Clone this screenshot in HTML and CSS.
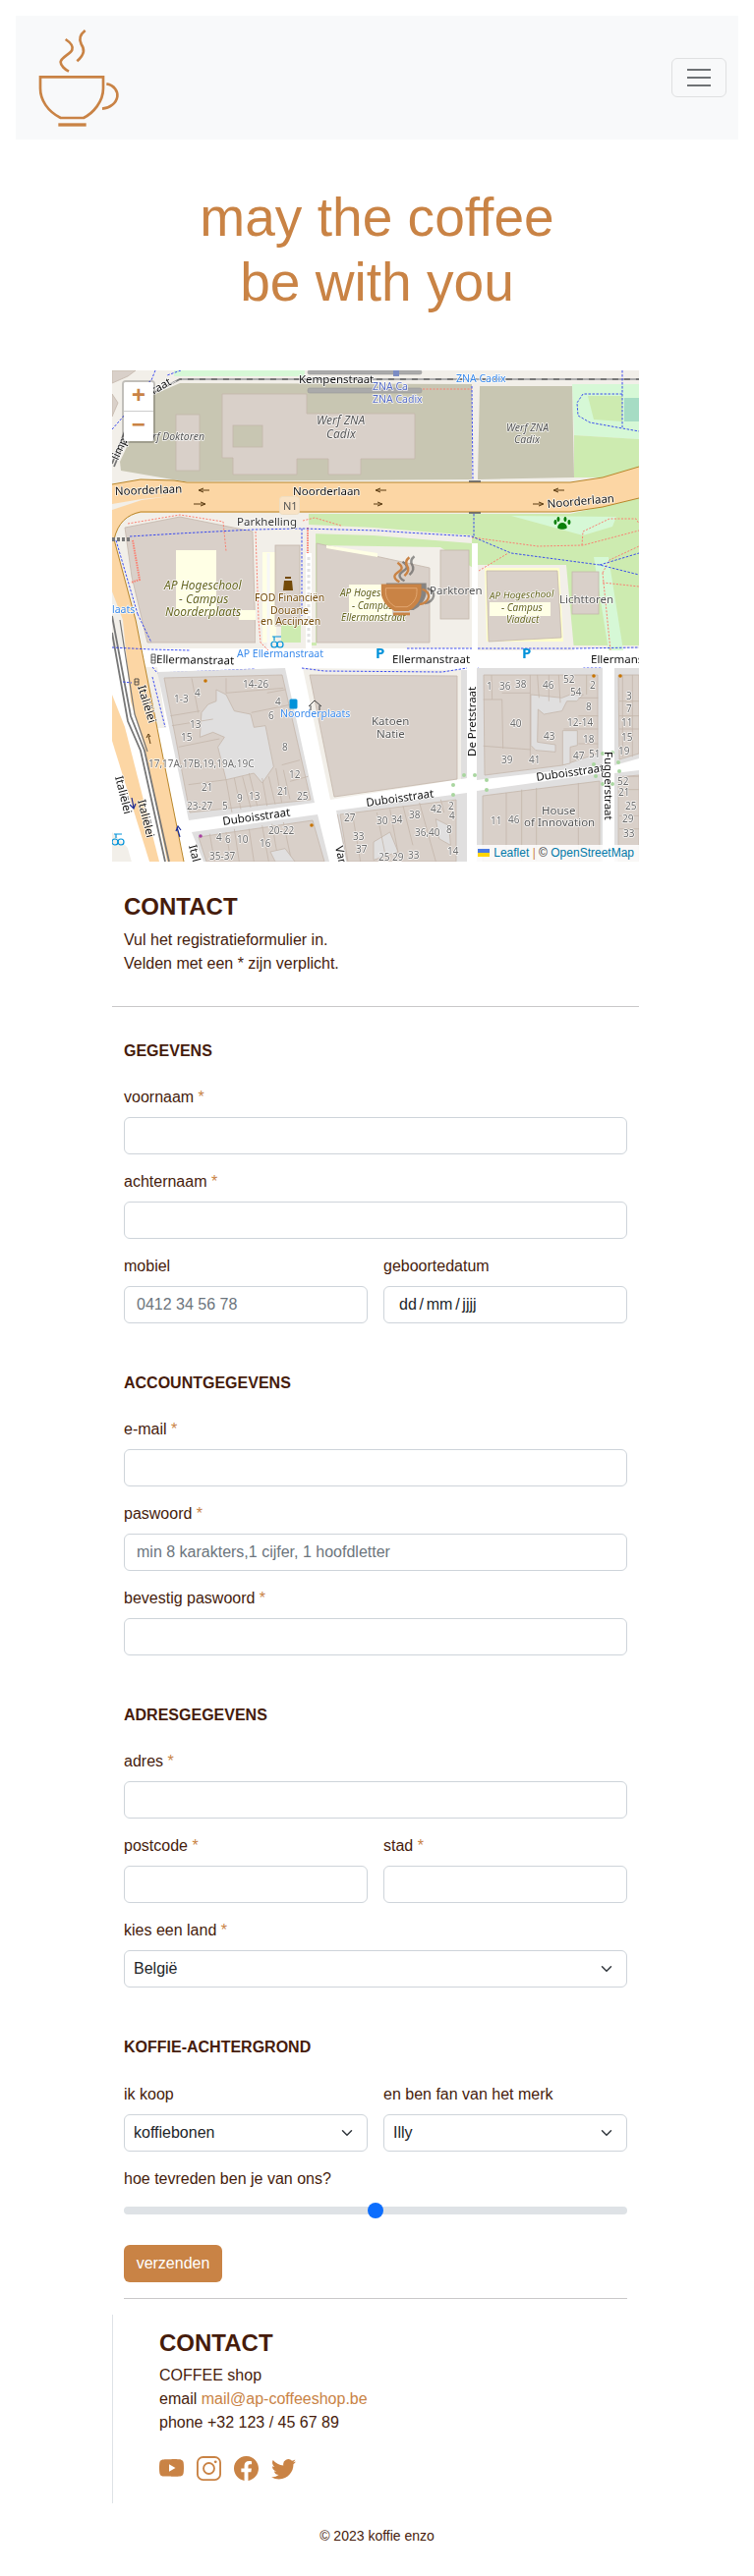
FILE: index.html
```html
<!DOCTYPE html>
<html lang="nl">
<head>
<meta charset="utf-8">
<title>koffie enzo</title>
<link rel="stylesheet" href="styles.css">
</head>
<body>
<nav class="navbar">
  <svg class="logo" viewBox="0 0 330 345">
    <path d="M110 60C125 70 135 80 130 92C125 105 95 115 95 130C95 140 108 152 120 158"/>
    <path d="M170 33C155 45 150 60 158 75C168 90 170 105 145 127"/>
    <path d="M235 196C260 200 270 220 268 235C265 255 245 270 222 272"/>
    <path d="M33 175H225V210C225 250 195 285 165 300H95C55 280 33 245 33 210Z"/>
    <path class="logo-saucer" d="M88 321H173"/>
  </svg>
  <button class="toggler" type="button" aria-label="menu"><span></span><span></span><span></span></button>
</nav>

<h1 class="title">may the coffee<br>be with you</h1>

<main class="container">
  <div class="map">
    <svg class="map-svg" viewBox="0 0 536 500">
      <defs><filter id="soft"><feGaussianBlur stdDeviation="1.4"/></filter></defs>
      <rect class="land" width="536" height="285"/>
      <rect class="street" y="283" width="536" height="217"/>

      <!-- top greens -->
      <polygon class="pale" points="63,0 196,0 196,6 63,6"/>
      <polygon class="pale" points="468,14 536,14 536,70 470,66"/>
      <polygon class="grass" points="470,66 536,70 536,99 499,109 470,109"/>
      <polygon class="grass" points="484,26 519,26 519,52 490,50"/>
      <rect class="pond" x="521" y="28" width="15" height="24"/>

      <!-- top left corner -->
      <polygon class="house" points="0,0 24,0 16,6 0,13"/>
      <polygon class="house" points="0,24 6,33 0,47"/>

      <!-- shipyards -->
      <polygon class="yard" points="8,93 39,26 69,13 366,14 366,111 73,113 9,102"/>
      <polygon class="yard" points="374,16 468,16 470,109 372,111"/>
      <polygon class="house" points="112,24 198,24 198,44 308,44 308,90 253,90 253,106 220,106 220,90 188,90 188,106 123,106 123,89 112,89"/>
      <rect class="yard-in" x="123" y="56" width="30" height="22"/>
      <rect class="house" x="65" y="45" width="24" height="57"/>

      <!-- green south of Noorderlaan -->
      <polygon class="grass" points="200,146 466,146 536,130 536,280 200,280"/>
      <polygon class="pale" points="406,148 513,149 509,159 479,168"/>
      <polygon class="land" points="200,157 266,160 366,168 366,176 266,168 200,166"/>
      <polygon class="land" points="208,178 334,180 372,204 372,280 208,280"/>
      <polygon class="land" points="372,198 462,198 470,285 372,285"/>
      <polygon class="pale" points="490,190 505,190 520,285 505,285"/>

      <!-- left land / campus -->
      <polygon class="house" points="13,160 69,149 143,164 146,277 36,277 20,210"/>
      <rect class="school" x="65" y="183" width="41" height="66"/>
      <rect class="school" x="129" y="244" width="17" height="10"/>
      <polygon class="land" points="146,166 207,166 207,277 146,277"/>
      <rect class="school" x="153" y="185" width="14" height="92"/>
      <rect class="house" x="166" y="178" width="25" height="82"/>
      <rect class="grass" x="172" y="259" width="20" height="18"/>
      <polygon class="house" points="208,176 323,201 323,277 208,277"/>
      <polygon class="school" points="218,178 270,186 270,190 218,181"/>
      <rect class="school" x="241" y="218" width="44" height="37"/>
      <rect class="house" x="334" y="183" width="29" height="70"/>
      <polygon class="school-line" points="379,201 455,201 459,276 381,276"/>
      <polygon class="house" points="381,204 453,204 457,272 383,276"/>
      <rect class="school" x="384" y="236" width="62" height="14"/>
      <rect class="house" x="468" y="205" width="27" height="43"/>
      <path class="white-path" d="M369 176V283"/>
      <path class="white-path thin" d="M159 186V283"/>
      <path class="white-path" d="M200 186V283"/>
      <path class="dots" d="M200 190V280"/>

      <!-- land strips in lower half -->
      <polygon class="land" points="30,302 46,302 55,364 44,364"/>
      <polygon class="land" points="194,303 361,305 361,415 222,437"/>
      <polygon class="block" points="355,305 361,305 361,415 355,416"/>
      <polygon class="house" points="201,310 351,311 351,416 226,434"/>
      <polygon class="land" points="0,470 30,500 0,500"/>

      <!-- Noorderlaan + left motorway -->
      <path class="road" d="M0 116L29 111L63 112L76 114H466L499 109L536 98V130L499 139L466 144L29 145C15 147 6 155 2 172L21 243L24 254L73 500H56L33 383L19 337L11 254L0 225Z"/>
      <path class="road-hole" d="M0 142L30 132L60 128L30 131L0 136Z"/>
      <polygon class="road" points="0,330 13,363 48,500 38,500 0,377"/>
      <path class="road-edge" d="M0 116L29 111L63 112L76 114H466L499 109L536 98M536 130L499 139L466 144H29C15 147 6 155 2 172L21 243L24 254L73 500"/>
      <path class="bridge" d="M363 113H375M363 145H375"/>

      <!-- rails -->
      <path class="rail" d="M0 267L16 357L29 387L54 500"/>
      <path class="rail" d="M0 250L19 352L33 387L58 500"/>
      <path class="rail thin-rail" d="M8 254L23 350L36 388"/>
      <path class="rail" d="M0 95L13 62M2 98L16 64"/>
      <path class="rail" d="M28 30L42 23L69 9H536"/>
      <path class="rail-white" d="M28 30L42 23L69 9H536"/>
      <path class="tram" d="M0 172H18"/>
      <path class="white-lane" d="M-3 395L30 510"/>

      <!-- grey bars -->
      <rect class="bar" x="199" y="0" width="116" height="4" rx="2"/>
      <rect class="bar" x="199" y="18" width="116" height="5" rx="2"/>
      <rect class="bar-blue" x="286" y="0" width="6" height="6"/>

      <!-- paths -->
      <path class="foot" d="M16 156L69 147L113 154L116 184"/>
      <path class="foot thick" d="M21 173L28 213L19 216"/>
      <path class="foot" d="M146 164L149 254L151 277L159 285"/>
      <path class="foot" d="M194 153L206 150L233 158"/>
      <path class="foot thick" d="M199 160V186"/>
      <path class="foot" d="M316 19H366"/>
      <path class="foot" d="M373 204L403 186"/>
      <path class="foot" d="M366 170L433 179L479 178L536 163"/>
      <path class="foot" d="M478 178L479 164L506 151L533 151L536 156"/>
      <path class="foot" d="M499 206L506 193L536 179"/>
      <path class="foot" d="M499 216L536 220"/>
      <path class="foot" d="M499 206L507 285"/>
      <path class="bike" d="M18 169L68 166L144 162L193 161L270 163L299 165L366 169L406 186L496 198L536 208"/>
      <path class="bike" d="M4 173L26 248"/>
      <path class="bike" d="M366 16L367 111M368 146V169M519 0V58M193 161V250"/>
      <path class="bike" d="M519 24H479L473 33L474 46L486 53L536 62"/>
      <path class="bike" d="M496 198L536 186"/>
      <path class="bike" d="M0 60L14 44V24M44 0L40 10L34 15M70 0L56 5"/>
      <path class="bike" d="M0 282L40 284L80 285M300 283H366M372 283L473 283L536 282"/>
      <path class="bike" d="M41 302L46 308L146 304M193 303L216 306L336 307L361 303M372 303L380 306L473 306L480 303L499 303"/>
      <path class="bike" d="M41 312L54 363M11 317L20 318"/>
      <path class="bike" d="M26 248L40 277"/>

      <!-- residential blocks -->
      <polygon class="block" points="46,307 176,303 206,440 78,458"/>
      <polygon class="house" points="53,313 173,310 202,437 79,450"/>
      <polygon class="block" points="81,470 209,452 221,500 93,500"/>
      <polygon class="house" points="88,475 204,458 216,500 96,500"/>
      <polygon class="block" points="228,448 361,430 361,500 238,500"/>
      <polygon class="house" points="232,452 350,437 350,500 240,500"/>
      <polygon class="block" points="371,303 499,303 499,402 371,417"/>
      <polygon class="house" points="378,310 494,310 494,390 458,402 379,412"/>
      <polygon class="block" points="511,303 536,303 536,395 511,402"/>
      <polygon class="house" points="515,310 536,310 536,390 516,396"/>
      <polygon class="block" points="371,428 499,410 499,500 371,500"/>
      <polygon class="house" points="377,433 496,418 496,500 377,500"/>
      <polygon class="block" points="511,410 536,407 536,500 511,500"/>
      <polygon class="house" points="515,414 536,412 536,500 515,500"/>

      <g transform="translate(-4 250) scale(.33333)">
        <polygon class="court" points="330,225 360,240 385,290 435,300 445,340 480,335 505,460 470,510 445,480 360,500 335,400 355,370 320,355 280,370 285,295 305,270 330,260"/>
        <path class="sub" d="M255 190L275 295M190 305L280 290M195 335L320 315M215 400L340 375M245 515L360 500M360 500L378 600M385 495L405 590M410 490L435 585M430 480L455 580M470 495L485 580M490 490L510 575M512 465L530 570M535 470L555 560M555 505L610 490M530 455L585 440M437 295L560 270M485 235L540 225M360 190V235L535 220M310 665L325 750M360 660L375 750M385 650L400 750M430 650L445 750M470 640L490 750M500 635L520 750M535 630L560 750M700 605L730 750M745 600L770 750"/>
        <polygon class="court" points="495,720 540,710 570,750 510,750"/>
      </g>
      <g transform="translate(266 250) scale(.33333)">
        <polygon class="court" points="480,240 575,250 600,240 640,240 620,260 590,260 575,290 520,300 502,285 500,385 555,393 555,415 495,410 480,395"/>
        <polygon class="court" points="577,350 622,350 622,395 600,400 600,450 577,455"/>
        <polygon class="court" points="0,690 50,660 75,720 0,745"/>
        <polygon class="court" points="190,620 230,640 235,700 200,680"/>
        <path class="sub" d="M335 255H392M392 255L395 405M335 397L480 408M360 180L362 255M392 235H478M478 180V440M500 180L505 250M535 180V260M565 180L570 265M625 250H685M625 305H685M580 345H685M625 390H685M650 180V240M50 590L80 750M90 580L120 700M140 570L190 750M205 560L215 600M10 600L40 750M405 540V750M452 530V750M497 525V750M625 510V750M760 180V430M790 180V430M750 260H810M750 305H810M750 345H810M750 490H810M750 530H810M750 610H810M750 650H810"/>
      </g>

      <!-- trees -->
      <g class="trees">
        <circle cx="358" cy="412" r="2"/><circle cx="369" cy="412" r="2"/><circle cx="381" cy="417" r="2"/><circle cx="381" cy="427" r="2"/><circle cx="347" cy="422" r="2"/><circle cx="347" cy="432" r="2"/>
        <circle cx="499" cy="390" r="2"/><circle cx="509" cy="389" r="2"/><circle cx="490" cy="401" r="2"/><circle cx="515" cy="399" r="2"/><circle cx="516" cy="408" r="2"/><circle cx="492" cy="413" r="2"/><circle cx="499" cy="421" r="2"/><circle cx="509" cy="421" r="2"/>
      </g>
      <circle class="dot-o" cx="95" cy="316" r="1.8"/><circle class="dot-o" cx="203" cy="463" r="1.8"/><circle class="dot-o" cx="490" cy="311" r="1.8"/><circle class="dot-o" cx="517" cy="311" r="1.8"/>
      <circle class="dot-p" cx="90" cy="474" r="1.8"/>

      <!-- road text -->
      <g class="t-road">
        <text x="190" y="13">Kempenstraat</text>
        <text x="61" y="14" text-anchor="end" transform="rotate(-30 61 14)">raat</text>
        <text x="6" y="92" transform="rotate(-65 6 92)">limp</text>
        <text x="3" y="127" transform="rotate(-2 3 127)">Noorderlaan</text>
        <text x="184" y="127">Noorderlaan</text>
        <text x="443" y="140" transform="rotate(-5 443 140)">Noorderlaan</text>
        <text x="127" y="158" class="grey">Parkhelling</text>
        <text x="45" y="298" transform="rotate(1 45 298)">Ellermanstraat</text>
        <text x="285" y="298">Ellermanstraat</text>
        <text x="487" y="298">Ellermans</text>
        <text x="113" y="463" transform="rotate(-8 113 463)">Duboisstraat</text>
        <text x="259" y="444" transform="rotate(-8 259 444)">Duboisstraat</text>
        <text x="432" y="418" transform="rotate(-8 432 418)">Duboisstraat</text>
        <text x="370" y="393" transform="rotate(-90 370 393)">De Pretstraat</text>
        <text x="501" y="388" transform="rotate(90 501 388)">Fuggerstraat</text>
        <text x="26" y="322" transform="rotate(73 26 322)">Italiëlei</text>
        <text x="26" y="438" transform="rotate(76 26 438)">Italiëlei</text>
        <text x="3" y="414" transform="rotate(76 3 414)">Italiëlei</text>
        <text x="78" y="484" transform="rotate(76 78 484)">Ital</text>
        <text x="227" y="485" transform="rotate(78 227 485)">Van</text>
      </g>
      <rect class="shield" x="170.500" y="128.500" width="20" height="18" rx="3"/>
      <text class="t-shield" x="174" y="142">N1</text>

      <!-- arrows -->
      <g class="arrow">
        <path d="M99 122H89M93 120L88 122L93 124"/><path d="M83 136H94M90 134L95 136L90 138"/>
        <path d="M279 122H269M273 120L268 122L273 124"/><path d="M266 136H274M270 134L275 136L270 138"/>
        <path d="M460 122H450M454 120L449 122L454 124"/><path d="M428 136H438M434 134L439 136L434 138"/>
        <path d="M37 372L39 380M35 374L37 370L39 373"/>
      </g>

      <!-- place labels -->
      <g class="t-yard">
        <text x="208" y="55" class="big">Werf ZNA</text><text x="218" y="69" class="big">Cadix</text>
        <text x="401" y="62">Werf ZNA</text><text x="409" y="74">Cadix</text>
        <text x="94" y="71" text-anchor="end">rf Doktoren</text>
      </g>
      <g class="t-school">
        <text x="53" y="223" class="big">AP Hogeschool</text><text x="68" y="237" class="big">- Campus</text><text x="54" y="250" class="big">Noorderplaats</text>
        <text x="232" y="230">AP Hogeschool</text><text x="244" y="243">- Campus</text><text x="233" y="255">Ellermanstraat</text>
        <text x="384" y="233" transform="rotate(-2 384 233)">AP Hogeschool</text><text x="396" y="245">- Campus</text><text x="401" y="257">Viaduct</text>
      </g>
      <g class="t-brown"><text x="145" y="235">FOD Financiën</text><text x="161" y="248">Douane</text><text x="151" y="259">en Accijnzen</text></g>
      <g class="t-transit">
        <text x="350" y="12">ZNA Cadix</text>
        <text x="127" y="292">AP Ellermanstraat</text>
        <text x="171" y="353">Noorderplaats</text>
        <text x="0" y="247">laats</text>
      </g>
      <g class="t-stop"><text x="265" y="20">ZNA Ca</text><text x="265" y="33">ZNA Cadix</text></g>
      <g class="t-build">
        <text x="323" y="228">Parktoren</text><text x="455" y="237">Lichttoren</text>
        <text x="264" y="361">Katoen</text><text x="269" y="374">Natie</text>
        <text x="437" y="452">House</text><text x="419" y="464">of Innovation</text>
      </g>
      <g class="t-num">
        <text x="133" y="323">14-26</text><text x="63" y="338">1-3</text><text x="84" y="332">4</text><text x="166" y="341">4</text><text x="159" y="355">6</text><text x="79" y="364">13</text><text x="70" y="377">15</text><text x="173" y="387">8</text><text x="37" y="404">17,17A,17B,19,19A,19C</text><text x="180" y="415">12</text><text x="91" y="428">21</text><text x="168" y="432">21</text><text x="188" y="437">25</text><text x="127" y="439">9</text><text x="139" y="437">13</text><text x="76" y="447">23-27</text><text x="112" y="447">5</text>
        <text x="159" y="472">20-22</text><text x="106" y="479">4</text><text x="115" y="481">6</text><text x="127" y="481">10</text><text x="150" y="485">16</text><text x="99" y="498">35-37</text><text x="236" y="459">27</text><text x="245" y="478">33</text><text x="248" y="491">37</text>
        <text x="381" y="325">1</text><text x="394" y="325">36</text><text x="410" y="323">38</text><text x="438" y="324">46</text><text x="459" y="318">52</text><text x="486" y="324">2</text><text x="466" y="331">54</text><text x="482" y="346">8</text><text x="405" y="363">40</text><text x="463" y="362">12-14</text><text x="439" y="376">43</text><text x="479" y="379">18</text><text x="469" y="396">47</text><text x="485" y="394">51</text><text x="396" y="400">39</text><text x="424" y="400">41</text>
        <text x="515" y="391">19</text><text x="523" y="335">3</text><text x="523" y="348">7</text><text x="518" y="362">11</text><text x="518" y="377">15</text><text x="514" y="422">52</text><text x="515" y="433">21</text><text x="522" y="447">25</text><text x="519" y="460">29</text><text x="520" y="475">33</text>
        <text x="385" y="462">11</text><text x="403" y="461">46</text><text x="269" y="462">30</text><text x="284" y="461">34</text><text x="302" y="456">38</text><text x="324" y="450">42</text><text x="342" y="447">2</text><text x="343" y="457">4</text><text x="308" y="474">36,40</text><text x="340" y="471">8</text><text x="341" y="493">14</text><text x="301" y="497">33</text><text x="271" y="499">25 29</text>
      </g>
      <text class="t-p" x="268" y="293">P</text>
      <text class="t-p" x="417" y="293">P</text>

      <!-- POI icons -->
      <g class="poi-blue">
        <rect x="180.500" y="334.500" width="8" height="10" rx="1.500"/>
        <path class="poi-line" d="M163 271H172M165 271V275"/><circle class="poi-line" cx="165" cy="279" r="3"/><circle class="poi-line" cx="171" cy="279" r="3"/>
        <path class="poi-line" d="M2 472H10M4 472V476"/><circle class="poi-line" cx="3" cy="480" r="3"/><circle class="poi-line" cx="9" cy="480" r="3"/>
      </g>
      <path class="poi-shelter" d="M200 342L206 336L213 342M202 341V346M211 341V346"/>
      <path class="poi-customs" d="M176 210H182V212H176ZM175 214H183L184 224H174Z"/>
      <path class="poi-paw" d="M458 155C454 155 452 160 454 161C456 162 460 162 462 161C464 160 462 155 458 155ZM454 149A1.500 2.500 0 1 1 453.900 149ZM461 149A1.500 2.500 0 1 1 460.900 149ZM451 152A1.500 2.500 0 1 1 450.900 152ZM465 152A1.500 2.500 0 1 1 464.900 152Z"/>
      <path class="poi-signal" d="M40 289H44V298H40Z M40 292H44M40 295H44"/>
      <path class="poi-signal" d="M23 314H27V320H23Z M23 317H27"/>
      <path class="poi-dark-blue" d="M20 435L22 445M18 442L22 446L24 441M66 465L69 475M65 469L67 464L70 468"/>

      <!-- marker -->
      <g transform="translate(273.500 182.700) scale(.2)" class="marker-shadow" filter="url(#soft)">
        <path d="M110 60C125 70 135 80 130 92C125 105 95 115 95 130C95 140 108 152 120 158M170 33C155 45 150 60 158 75C168 90 170 105 145 127M235 196C260 200 270 220 268 235C265 255 245 270 222 272"/>
        <path class="fill" d="M33 175H225V210C225 250 195 285 165 300H95C55 280 33 245 33 210Z"/>
      </g>
      <g transform="translate(268.400 183.700) scale(.2)" class="marker">
        <path d="M110 60C125 70 135 80 130 92C125 105 95 115 95 130C95 140 108 152 120 158M170 33C155 45 150 60 158 75C168 90 170 105 145 127M235 196C260 200 270 220 268 235C265 255 245 270 222 272"/>
        <path class="fill" d="M33 175H225V210C225 250 195 285 165 300H95C55 280 33 245 33 210Z"/>
        <path class="inner" d="M50 190H208V210C208 245 185 272 158 285H100C70 270 50 240 50 210Z"/>
        <path class="saucer" d="M88 321H173"/>
      </g>
    </svg>
    <div class="zoom">
      <button class="zoom-btn" type="button">+</button>
      <button class="zoom-btn" type="button">−</button>
    </div>
    <div class="attribution">
      <svg class="flag" viewBox="0 0 12 8"><rect width="12" height="4" fill="#4c7be1"/><rect y="4" width="12" height="4" fill="#ffd500"/></svg>
      <a class="attr-link" href="#">Leaflet</a> <span class="attr-sep">|</span> © <a class="attr-link" href="#">OpenStreetMap</a>
    </div>
  </div>

  <section class="intro">
    <h2 class="heading">CONTACT</h2>
    <p class="copy">Vul het registratieformulier in.</p>
    <p class="copy">Velden met een * zijn verplicht.</p>
  </section>
  <hr class="rule rule-intro">

  <form class="form">
    <h3 class="section-title">GEGEVENS</h3>
    <div class="field"><label class="label">voornaam <span class="req">*</span></label><input class="control" type="text"></div>
    <div class="field"><label class="label">achternaam <span class="req">*</span></label><input class="control" type="text"></div>
    <div class="row">
      <div class="field"><label class="label">mobiel</label><input class="control" type="tel" placeholder="0412 34 56 78"></div>
      <div class="field"><label class="label">geboortedatum</label><input class="control date" type="text" value="dd / mm / jjjj"></div>
    </div>

    <h3 class="section-title spaced">ACCOUNTGEGEVENS</h3>
    <div class="field"><label class="label">e-mail <span class="req">*</span></label><input class="control" type="email"></div>
    <div class="field"><label class="label">paswoord <span class="req">*</span></label><input class="control" type="text" placeholder="min 8 karakters,1 cijfer, 1 hoofdletter"></div>
    <div class="field"><label class="label">bevestig paswoord <span class="req">*</span></label><input class="control" type="text"></div>

    <h3 class="section-title spaced">ADRESGEGEVENS</h3>
    <div class="field"><label class="label">adres <span class="req">*</span></label><input class="control" type="text"></div>
    <div class="row">
      <div class="field"><label class="label">postcode <span class="req">*</span></label><input class="control" type="text"></div>
      <div class="field"><label class="label">stad <span class="req">*</span></label><input class="control" type="text"></div>
    </div>
    <div class="field"><label class="label">kies een land <span class="req">*</span></label><select class="control select"><option>België</option></select></div>

    <h3 class="section-title spaced">KOFFIE-ACHTERGROND</h3>
    <div class="row">
      <div class="field"><label class="label">ik koop</label><select class="control select"><option>koffiebonen</option></select></div>
      <div class="field"><label class="label">en ben fan van het merk</label><select class="control select"><option>Illy</option></select></div>
    </div>
    <div class="range-field"><label class="label">hoe tevreden ben je van ons?</label><input class="range" type="range" min="0" max="100" value="50"></div>
    <button class="submit" type="button">verzenden</button>
    <hr class="rule rule-form">
  </form>

  <section class="contact">
    <h2 class="heading">CONTACT</h2>
    <p class="copy">COFFEE shop</p>
    <p class="copy">email <a class="mail" href="#">mail@ap-coffeeshop.be</a></p>
    <p class="copy">phone +32 123 / 45 67 89</p>
    <div class="socials">
      <svg class="social" viewBox="0 0 16 16"><path d="M8.051 1.999h.089c.822.003 4.987.033 6.11.335a2.01 2.01 0 0 1 1.415 1.42c.101.38.172.883.22 1.402l.01.104.022.26.008.104c.065.914.073 1.77.074 1.957v.075c-.001.194-.01 1.108-.082 2.06l-.008.105-.009.104c-.05.572-.124 1.14-.235 1.558a2.007 2.007 0 0 1-1.415 1.42c-1.16.312-5.569.334-6.18.335h-.142c-.309 0-1.587-.006-2.927-.052l-.17-.006-.087-.004-.171-.007-.171-.007c-1.11-.049-2.167-.128-2.654-.26a2.007 2.007 0 0 1-1.415-1.419c-.111-.417-.185-.986-.235-1.558L.09 9.82l-.008-.104A31.4 31.4 0 0 1 0 7.68v-.123c.002-.215.01-.958.064-1.778l.007-.103.003-.052.008-.104.022-.26.01-.104c.048-.519.119-1.023.22-1.402a2.007 2.007 0 0 1 1.415-1.42c.487-.13 1.544-.21 2.654-.26l.17-.007.172-.006.086-.003.171-.007A99.788 99.788 0 0 1 7.858 2h.193zM6.4 5.209v4.818l4.157-2.408L6.4 5.209z"/></svg>
      <svg class="social" viewBox="0 0 16 16"><rect class="ig" x=".6" y=".6" width="14.800" height="14.800" rx="3.600"/><circle class="ig" cx="8" cy="8" r="3.500"/><circle cx="12.300" cy="3.700" r=".9"/></svg>
      <svg class="social" viewBox="0 0 16 16"><path d="M16 8.049c0-4.446-3.582-8.05-8-8.05C3.58 0-.002 3.603-.002 8.05c0 4.017 2.926 7.347 6.75 7.951v-5.625h-2.03V8.05H6.75V6.275c0-2.017 1.195-3.131 3.022-3.131.876 0 1.791.157 1.791.157v1.98h-1.009c-.993 0-1.303.621-1.303 1.258v1.51h2.218l-.354 2.326H9.25V16c3.824-.604 6.75-3.934 6.75-7.951z"/></svg>
      <svg class="social" viewBox="0 0 16 16"><path d="M5.026 15c6.038 0 9.341-5.003 9.341-9.334 0-.14 0-.282-.006-.422A6.685 6.685 0 0 0 16 3.542a6.658 6.658 0 0 1-1.889.518 3.301 3.301 0 0 0 1.447-1.817 6.533 6.533 0 0 1-2.087.793A3.286 3.286 0 0 0 7.875 6.03a9.325 9.325 0 0 1-6.767-3.429 3.289 3.289 0 0 0 1.018 4.382A3.323 3.323 0 0 1 .64 6.575v.045a3.288 3.288 0 0 0 2.632 3.218 3.203 3.203 0 0 1-.865.115 3.23 3.23 0 0 1-.614-.057 3.283 3.283 0 0 0 3.067 2.277A6.588 6.588 0 0 1 .78 13.58a6.32 6.32 0 0 1-.78-.045A9.344 9.344 0 0 0 5.026 15z"/></svg>
    </div>
  </section>
</main>
<footer class="copyright">© 2023 koffie enzo</footer>
</body>
</html>
```
FILE: styles.css
```css
* { box-sizing: border-box; }
html, body { margin: 0; padding: 0; }
body {
  font-family: "Liberation Sans", Arial, sans-serif;
  font-size: 16px;
  line-height: 24px;
  color: #461c0c;
  background: #fff;
}

/* navbar */
.navbar {
  margin: 16px 16px 0;
  height: 126px;
  padding: 4px 12px 0 14px;
  background: #f8f9fa;
  display: flex;
  justify-content: space-between;
  align-items: flex-start;
}
.logo { width: 110px; height: 115px; fill: none; stroke: #c98345; stroke-width: 8; }
.logo-saucer { stroke-width: 10; }
.toggler {
  margin-top: 39px;
  width: 56px;
  height: 40px;
  padding: 0;
  background: transparent;
  border: 1px solid #dfe0e1;
  border-radius: 6px;
  display: flex;
  flex-direction: column;
  align-items: center;
  justify-content: center;
  gap: 6px;
}
.toggler span { display: block; width: 24px; height: 2px; background: #6f7275; }

.title {
  margin: 47px 0 0;
  text-align: center;
  font-size: 55.1px;
  line-height: 65.5px;
  font-weight: 400;
  color: #c98345;
}

/* page column */
.container { margin: 57px 117px 0 114px; }

/* map */
.map { position: relative; height: 500px; overflow: hidden; background: #f2efe9; }
.map-svg { display: block; width: 536px; height: 500px; filter: blur(.35px); font-family: "Noto Sans", sans-serif; }
.land { fill: #f2efe9; }
.street { fill: #fff; }
.pale { fill: #d6f8d6; }
.grass { fill: #cdebb0; }
.pond { fill: #a6dcc4; }
.house { fill: #d9d0c9; stroke: #c4b6ab; stroke-width: .8; }
.yard { fill: #c8c6b2; }
.yard-in { fill: #c8c6b2; stroke: #c4b6ab; stroke-width: .8; }
.school { fill: #ffffe5; }
.school-line { fill: #ffffcc; }
.block { fill: #e0dfdf; }
.court { fill: #e0dfdf; stroke: #c4b6ab; stroke-width: .8; vector-effect: non-scaling-stroke; }
.sub { fill: none; stroke: #c4b6ab; stroke-width: .8; vector-effect: non-scaling-stroke; }
.road { fill: #fcd6a4; }
.road-hole { fill: #f2efe9; }
.road-edge { fill: none; stroke: #b8862a; stroke-width: 1; }
.bridge { stroke: #555; stroke-width: 1.5; fill: none; }
.rail { fill: none; stroke: #777; stroke-width: 1.8; }
.thin-rail { stroke-width: 1.2; }
.rail-white { fill: none; stroke: #fff; stroke-width: .8; stroke-dasharray: 6 6; }
.tram { stroke: #777; stroke-width: 4; stroke-dasharray: 3 2; fill: none; }
.white-lane { stroke: #fff; stroke-width: 14; fill: none; }
.white-path { stroke: #fff; stroke-width: 6; fill: none; }
.white-path.thin { stroke-width: 3; stroke: #f7f7f7; }
.dots { stroke: #e2e2e2; stroke-width: 3; stroke-dasharray: 3 3; fill: none; }
.bar { fill: #aaa; stroke: #999; stroke-width: .6; }
.bar-blue { fill: #7b8cc4; }
.foot { fill: none; stroke: #fa8072; stroke-width: 1; stroke-dasharray: 2 1.500; }
.foot.thick { stroke-width: 2; stroke-dasharray: 1.500 1; }
.bike { fill: none; stroke: #2a3cf0; stroke-width: .9; stroke-dasharray: 2.500 1.500; }
.trees { fill: #a9d6a0; }
.dot-o { fill: #c77400; }
.dot-p { fill: #a83fa0; }

.t-road text, .t-yard text, .t-school text, .t-brown text, .t-transit text, .t-stop text, .t-build text, .t-num text, .t-shield {
  paint-order: stroke;
  stroke: rgba(255, 255, 255, .85);
  stroke-width: 1.6px;
  stroke-linejoin: round;
}
.t-road { font-size: 11.500px; fill: #111; }
.t-road .grey { fill: #333; }
.t-shield { font-size: 11px; fill: #555; stroke: none; }
.shield { fill: #f9e3c6; stroke: #eeddc2; }
.t-yard { font-size: 10.500px; font-style: italic; fill: #555; }
.t-yard .big { font-size: 12px; }
.t-school { font-size: 10px; font-style: italic; fill: #66661f; }
.t-school .big { font-size: 12px; }
.t-brown { font-size: 10.500px; fill: #734a08; }
.t-transit { font-size: 10.500px; fill: #3b8bec; }
.t-stop { font-size: 10.500px; fill: #5a6fc8; }
.t-build { font-size: 11.500px; fill: #555; }
.t-num { font-size: 10px; fill: #6d6d6d; }
.t-p { font-size: 15px; font-weight: 700; fill: #0092da; }
.arrow { fill: none; stroke: #5a3a10; stroke-width: 1; }
.poi-blue { fill: #0092da; }
.poi-line { fill: none; stroke: #0092da; stroke-width: 1.2; }
.poi-shelter { fill: none; stroke: #444; stroke-width: 1; }
.poi-customs { fill: #734a08; }
.poi-paw { fill: #0a7f0a; }
.poi-signal { fill: none; stroke: #333; stroke-width: .8; }
.poi-dark-blue { fill: none; stroke: #1c2c96; stroke-width: 1.2; }

.marker path, .marker-shadow path { fill: none; stroke-width: 12; }
.marker path { stroke: #c98345; }
.marker .fill { fill: #c98345; stroke: #c98345; }
.marker .inner { stroke: #e2a770; stroke-width: 5; }
.marker .saucer { stroke-width: 14; }
.marker-shadow { opacity: .55; }
.marker-shadow path { stroke: #444; }
.marker-shadow .fill { fill: #444; }

.zoom {
  position: absolute;
  left: 10px;
  top: 10px;
  width: 34px;
  border: 2px solid rgba(0, 0, 0, .2);
  border-radius: 4px;
  background-clip: padding-box;
  display: flex;
  flex-direction: column;
}
.zoom-btn {
  width: 30px;
  height: 30px;
  padding: 0;
  background: #fff;
  border: 0;
  color: #c98345;
  font: 700 24px/30px "Liberation Mono", monospace;
  text-align: center;
}
.zoom-btn:first-child { border-bottom: 1px solid #ccc; border-radius: 2px 2px 0 0; }
.zoom-btn:last-child { border-radius: 0 0 2px 2px; }
.attribution {
  position: absolute;
  right: 0;
  bottom: 0;
  height: 17px;
  padding: 0 5px 0 2px;
  background: rgba(255, 255, 255, .85);
  font-size: 12px;
  line-height: 17px;
  color: #333;
  white-space: nowrap;
}
.flag { display: inline-block; width: 12px; height: 8px; margin-right: 1px; }
.attr-link { color: #0078a8; text-decoration: none; }
.attr-sep { color: #c98345; }

/* intro */
.intro { padding: 32px 12px 0; }
.heading { margin: 0 0 7px; font-size: 24px; line-height: 28.8px; font-weight: 700; }
.copy { margin: 0; }
.rule { border: 0; height: 1px; background: #c9c8c9; margin: 0; }
.rule-intro { margin-top: 31px; }

/* form */
.form { padding: 35px 12px 0; display: flex; flex-direction: column; }
.section-title { margin: 0 0 26px; font-size: 16px; line-height: 19.2px; font-weight: 700; }
.section-title.spaced { margin-top: 35px; }
.field { margin-bottom: 16px; min-width: 0; }
.row { display: grid; grid-template-columns: 1fr 1fr; column-gap: 16px; }
.label { display: block; margin-bottom: 8px; }
.req { color: #c98345; }
.control {
  display: block;
  width: 100%;
  height: 38px;
  padding: 6px 12px;
  border: 1px solid #ced4da;
  border-radius: 6px;
  background: #fff;
  color: #212529;
  font: 16px/24px "Liberation Sans", Arial, sans-serif;
  outline: 0;
}
.control::placeholder { color: #6c757d; opacity: 1; }
.date { padding-left: 15px; word-spacing: -1.700px; }
.select {
  appearance: none;
  padding: 6px 36px 6px 9px;
  background-image: url("data:image/svg+xml,%3csvg xmlns='http://www.w3.org/2000/svg' viewBox='0 0 16 16'%3e%3cpath fill='none' stroke='%23343a40' stroke-linecap='round' stroke-linejoin='round' stroke-width='2' d='m2 5 6 6 6-6'/%3e%3c/svg%3e");
  background-repeat: no-repeat;
  background-position: right 12px center;
  background-size: 16px 12px;
}
.range-field { margin-bottom: 23px; }
.range {
  display: block;
  width: 100%;
  height: 24px;
  margin: 0;
  padding: 0;
  background: transparent;
  appearance: none;
}
.range::-webkit-slider-runnable-track { height: 8px; background: #dee2e6; border-radius: 16px; }
.range::-webkit-slider-thumb {
  appearance: none;
  width: 16px;
  height: 16px;
  margin-top: -4px;
  border: 0;
  border-radius: 50%;
  background: #0d6efd;
}
.submit {
  display: block;
  width: 100px;
  height: 38px;
  padding: 0;
  border: 0;
  border-radius: 6px;
  background: #c98345;
  color: #fff;
  font: 16px/38px "Liberation Sans", Arial, sans-serif;
}
.rule-form { margin-top: 16px; width: 100%; }

/* contact */
.contact {
  margin-top: 16px;
  padding: 15px 0 23px 47px;
  border-left: 1px solid #dee2e6;
}
.mail { color: #c98345; text-decoration: none; }
.socials { display: flex; gap: 13px; margin-top: 22px; }
.social { width: 25px; height: 25px; fill: #c98345; }
.ig { fill: none; stroke: #c98345; stroke-width: 1.200; }

.copyright { margin-top: 23px; padding-bottom: 35px; text-align: center; font-size: 14px; line-height: 21px; }
```
